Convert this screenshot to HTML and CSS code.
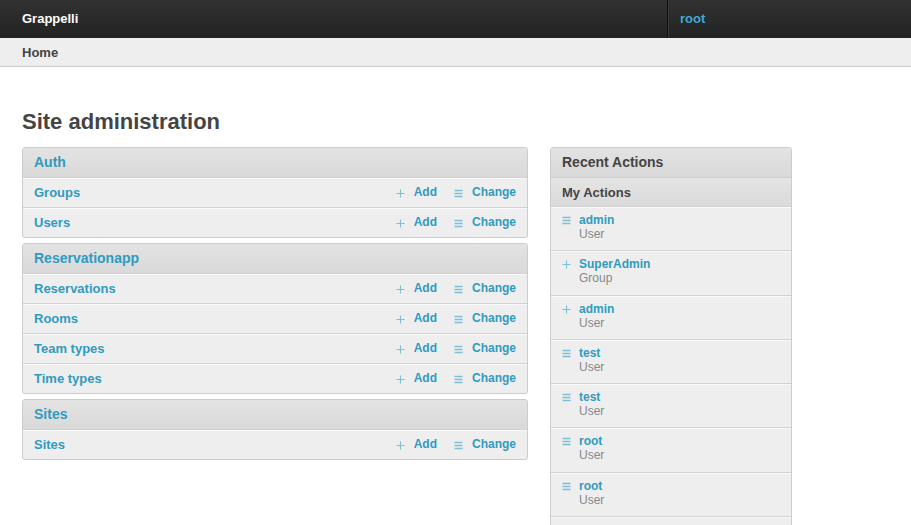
FILE: index.html
```html
<!DOCTYPE html>
<html>
<head>
<meta charset="utf-8">
<title>Site administration | Grappelli</title>
<link rel="stylesheet" href="styles.css">
</head>
<body>
<header class="topbar">
  <div class="brand">Grappelli</div>
  <div class="usernav"><a href="#" class="user">root</a></div>
</header>
<nav class="crumbs"><a href="#">Home</a></nav>

<main class="content">
  <h1 class="title">Site administration</h1>
  <div class="columns">
    <div class="apps">
      <section class="module">
        <h2 class="mod-head"><a href="#">Auth</a></h2>
        <div class="row"><a href="#" class="model">Groups</a><span class="acts"><a href="#" class="act"><svg class="ic" viewBox="0 0 9 9"><path d="M4.5 0.5v8M0.5 4.5h8"/></svg>Add</a><a href="#" class="act"><svg class="ic ic-l" viewBox="0 0 9 9"><path d="M0.5 1.5h8M0.5 4.5h8M0.5 7.5h8"/></svg>Change</a></span></div>
        <div class="row"><a href="#" class="model">Users</a><span class="acts"><a href="#" class="act"><svg class="ic" viewBox="0 0 9 9"><path d="M4.5 0.5v8M0.5 4.5h8"/></svg>Add</a><a href="#" class="act"><svg class="ic ic-l" viewBox="0 0 9 9"><path d="M0.5 1.5h8M0.5 4.5h8M0.5 7.5h8"/></svg>Change</a></span></div>
      </section>
      <section class="module">
        <h2 class="mod-head"><a href="#">Reservationapp</a></h2>
        <div class="row"><a href="#" class="model">Reservations</a><span class="acts"><a href="#" class="act"><svg class="ic" viewBox="0 0 9 9"><path d="M4.5 0.5v8M0.5 4.5h8"/></svg>Add</a><a href="#" class="act"><svg class="ic ic-l" viewBox="0 0 9 9"><path d="M0.5 1.5h8M0.5 4.5h8M0.5 7.5h8"/></svg>Change</a></span></div>
        <div class="row"><a href="#" class="model">Rooms</a><span class="acts"><a href="#" class="act"><svg class="ic" viewBox="0 0 9 9"><path d="M4.5 0.5v8M0.5 4.5h8"/></svg>Add</a><a href="#" class="act"><svg class="ic ic-l" viewBox="0 0 9 9"><path d="M0.5 1.5h8M0.5 4.5h8M0.5 7.5h8"/></svg>Change</a></span></div>
        <div class="row"><a href="#" class="model">Team types</a><span class="acts"><a href="#" class="act"><svg class="ic" viewBox="0 0 9 9"><path d="M4.5 0.5v8M0.5 4.5h8"/></svg>Add</a><a href="#" class="act"><svg class="ic ic-l" viewBox="0 0 9 9"><path d="M0.5 1.5h8M0.5 4.5h8M0.5 7.5h8"/></svg>Change</a></span></div>
        <div class="row"><a href="#" class="model">Time types</a><span class="acts"><a href="#" class="act"><svg class="ic" viewBox="0 0 9 9"><path d="M4.5 0.5v8M0.5 4.5h8"/></svg>Add</a><a href="#" class="act"><svg class="ic ic-l" viewBox="0 0 9 9"><path d="M0.5 1.5h8M0.5 4.5h8M0.5 7.5h8"/></svg>Change</a></span></div>
      </section>
      <section class="module">
        <h2 class="mod-head"><a href="#">Sites</a></h2>
        <div class="row"><a href="#" class="model">Sites</a><span class="acts"><a href="#" class="act"><svg class="ic" viewBox="0 0 9 9"><path d="M4.5 0.5v8M0.5 4.5h8"/></svg>Add</a><a href="#" class="act"><svg class="ic ic-l" viewBox="0 0 9 9"><path d="M0.5 1.5h8M0.5 4.5h8M0.5 7.5h8"/></svg>Change</a></span></div>
      </section>
    </div>

    <aside class="recent">
      <section class="module">
        <h2 class="mod-head plain">Recent Actions</h2>
        <h3 class="sub-head">My Actions</h3>
        <ul class="actions">
          <li class="item"><svg class="ic ic-l" viewBox="0 0 9 9"><path d="M0.5 1.5h8M0.5 4.5h8M0.5 7.5h8"/></svg><div><a href="#" class="obj">admin</a><div class="kind">User</div></div></li>
          <li class="item"><svg class="ic" viewBox="0 0 9 9"><path d="M4.5 0.5v8M0.5 4.5h8"/></svg><div><a href="#" class="obj">SuperAdmin</a><div class="kind">Group</div></div></li>
          <li class="item"><svg class="ic" viewBox="0 0 9 9"><path d="M4.5 0.5v8M0.5 4.5h8"/></svg><div><a href="#" class="obj">admin</a><div class="kind">User</div></div></li>
          <li class="item"><svg class="ic ic-l" viewBox="0 0 9 9"><path d="M0.5 1.5h8M0.5 4.5h8M0.5 7.5h8"/></svg><div><a href="#" class="obj">test</a><div class="kind">User</div></div></li>
          <li class="item"><svg class="ic ic-l" viewBox="0 0 9 9"><path d="M0.5 1.5h8M0.5 4.5h8M0.5 7.5h8"/></svg><div><a href="#" class="obj">test</a><div class="kind">User</div></div></li>
          <li class="item"><svg class="ic ic-l" viewBox="0 0 9 9"><path d="M0.5 1.5h8M0.5 4.5h8M0.5 7.5h8"/></svg><div><a href="#" class="obj">root</a><div class="kind">User</div></div></li>
          <li class="item"><svg class="ic ic-l" viewBox="0 0 9 9"><path d="M0.5 1.5h8M0.5 4.5h8M0.5 7.5h8"/></svg><div><a href="#" class="obj">root</a><div class="kind">User</div></div></li>
          <li class="item"></li>
        </ul>
      </section>
    </aside>
  </div>
</main>
</body>
</html>
```
FILE: styles.css
```css
html, body {
  margin: 0;
  padding: 0;
  height: 100%;
  overflow: hidden;
}
body {
  font-family: "Liberation Sans", Arial, sans-serif;
  font-size: 12px;
  color: #444;
  background: #fff;
}
a { text-decoration: none; color: #309bbf; }

.topbar {
  height: 38px;
  display: flex;
  align-items: stretch;
  background: linear-gradient(#323232, #222);
}
.brand {
  flex: 1;
  padding-left: 22px;
  display: flex;
  align-items: center;
  color: #fff;
  font-weight: bold;
  font-size: 13px;
  padding-bottom: 2px;
}
.usernav {
  width: 231px;
  border-left: 1px solid #0e0e0e;
  box-shadow: inset 1px 0 0 #3a3a3a;
  display: flex;
  align-items: center;
  padding-left: 12px;
  padding-bottom: 2px;
}
.user {
  color: #3fa9d6;
  font-weight: bold;
  font-size: 13px;
}

.crumbs {
  height: 28px;
  background: #eee;
  border-bottom: 1px solid #ccc;
  display: flex;
  align-items: center;
  padding-left: 22px;
}
.crumbs a {
  color: #444;
  font-weight: bold;
  font-size: 13px;
}

.content {
  padding: 42px 22px 0;
}
.title {
  margin: 0 0 12px;
  font-size: 22px;
  line-height: 26px;
  font-weight: bold;
  color: #444;
}
.columns {
  display: flex;
  align-items: flex-start;
  gap: 22px;
}
.apps {
  width: 506px;
  display: flex;
  flex-direction: column;
  gap: 5px;
}
.recent {
  width: 242px;
}

.module {
  border: 1px solid #ccc;
  border-radius: 3px;
  background: #eee;
  overflow: hidden;
}
.mod-head {
  margin: 0;
  height: 28px;
  display: flex;
  align-items: center;
  padding: 0 11px 1px;
  font-size: 14px;
  font-weight: bold;
  background: linear-gradient(#e3e3e3, #d9d9d9);
  color: #444;
}
.mod-head a { color: #309bbf; }

.row {
  height: 29px;
  border-top: 1px solid #d2d2d2;
  box-shadow: inset 0 1px 0 #fafafa;
  display: flex;
  align-items: center;
  justify-content: space-between;
  padding: 0 11px 0 11px;
}
.model {
  font-size: 13px;
  font-weight: bold;
}
.acts {
  display: flex;
  gap: 17px;
  padding-bottom: 2px;
}
.act {
  display: flex;
  align-items: center;
  gap: 9px;
  font-weight: bold;
  font-size: 12px;
}
.ic {
  width: 9px;
  height: 9px;
  flex: none;
  stroke: #7fbfd6;
  stroke-width: 1.1;
  fill: none;
  margin-top: 3px;
}
.ic-l { stroke-width: 1.3; }

.sub-head {
  margin: 0;
  height: 28px;
  border-top: 1px solid #ccc;
  background: linear-gradient(#e4e4e4, #dadada);
  display: flex;
  align-items: center;
  padding: 0 11px;
  font-size: 13px;
  font-weight: bold;
  color: #444;
}
.actions {
  list-style: none;
  margin: 0;
  padding: 0;
}
.item {
  border-top: 1px solid #d2d2d2;
  box-shadow: inset 0 1px 0 #fafafa;
  padding: 6px 11px 9px;
  height: 28.3px;
  display: flex;
  align-items: flex-start;
  gap: 8px;
  line-height: 14px;
}
.item .ic { margin-top: 3px; }
.obj {
  font-weight: bold;
  font-size: 12px;
  display: block;
}
.kind {
  color: #888;
  font-size: 12px;
}
```
